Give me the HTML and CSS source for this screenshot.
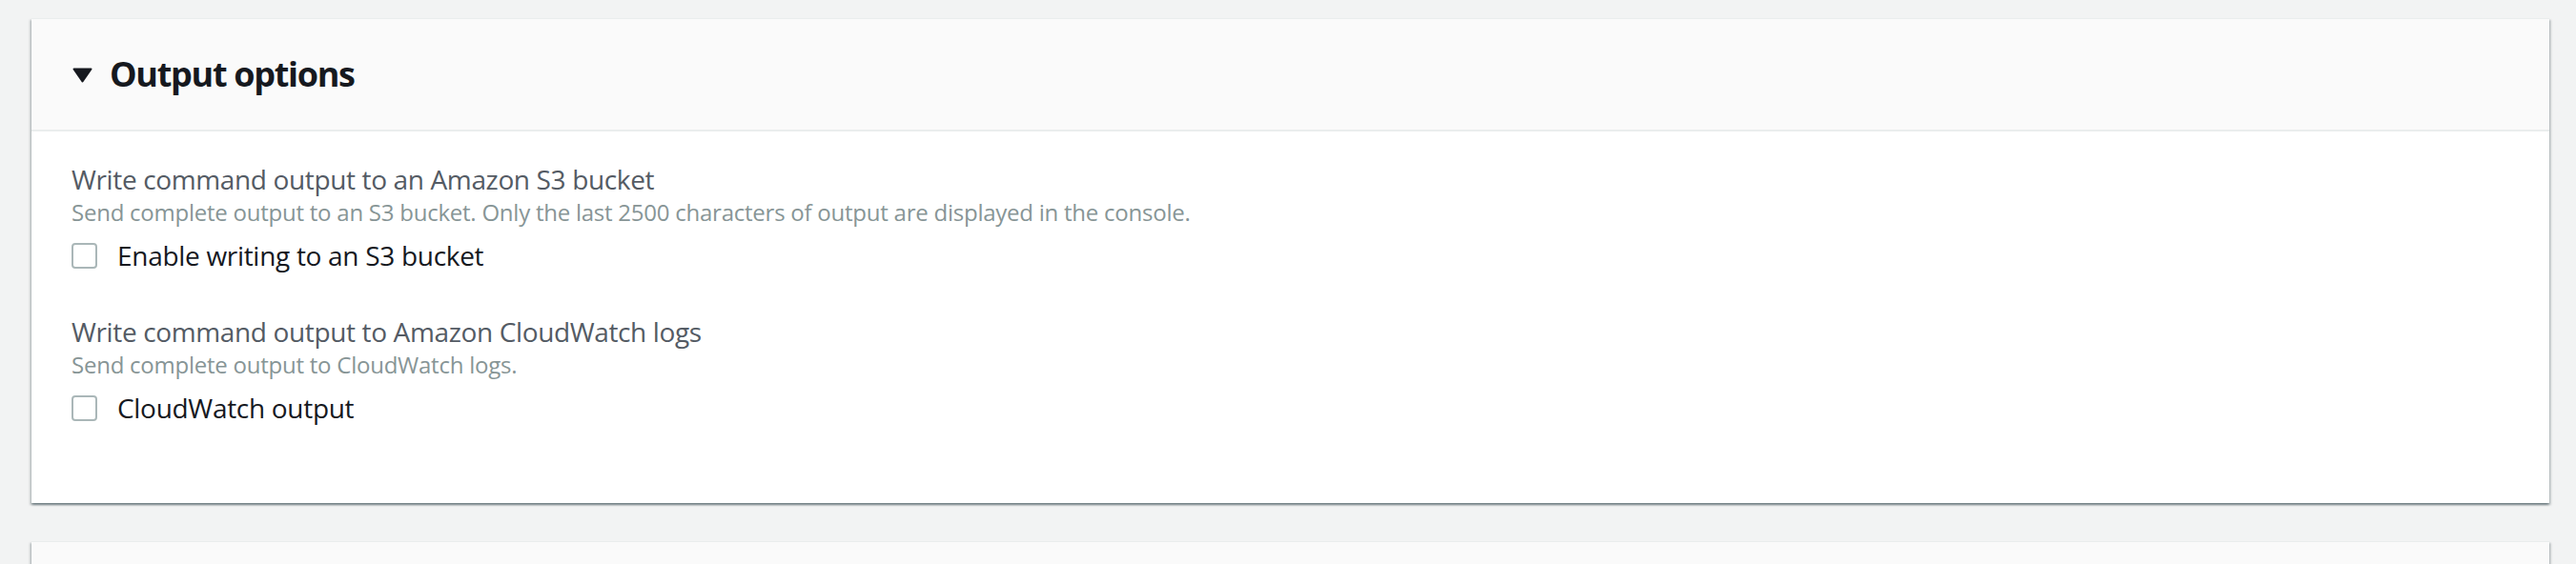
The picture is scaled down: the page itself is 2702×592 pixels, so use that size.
FILE: index.html
```html
<!DOCTYPE html>
<html lang="en">
<head>
<meta charset="utf-8">
<title>Output options</title>
<link rel="stylesheet" href="styles.css">
</head>
<body>
  <section class="card">
    <header class="card-header">
      <svg class="caret" width="21" height="16" viewBox="0 0 21 16" aria-hidden="true">
        <path d="M1.5 1.5 H19.5 L10.5 14.5 Z" fill="#16191f" stroke="#16191f" stroke-width="2" stroke-linejoin="round"/>
      </svg>
      <h2 class="card-title">Output options</h2>
    </header>
    <div class="card-body">
      <div class="field">
        <div class="field-label">Write command output to an Amazon S3 bucket</div>
        <div class="field-desc">Send complete output to an S3 bucket. Only the last 2500 characters of output are displayed in the console.</div>
        <label class="check-row"><span class="checkbox"></span><span class="check-label">Enable writing to an S3 bucket</span></label>
      </div>
      <div class="field">
        <div class="field-label">Write command output to Amazon CloudWatch logs</div>
        <div class="field-desc">Send complete output to CloudWatch logs.</div>
        <label class="check-row"><span class="checkbox"></span><span class="check-label">CloudWatch output</span></label>
      </div>
    </div>
  </section>
  <section class="card card-next">
    <div class="card-header-stub"></div>
  </section>
</body>
</html>
```

FILE: styles.css
```css
html, body {
  margin: 0;
  padding: 0;
}

body {
  background: #f2f3f3;
  padding: 19px 28px 0 33px;
  font-family: "Open Sans", "Noto Sans", sans-serif;
  color: #16191f;
  overflow: hidden;
}

.card {
  background: #ffffff;
  border-top: 1px solid #eaeded;
  box-shadow: 0 2px 2px 0 rgba(0, 28, 36, 0.35),
              2px 2px 2px 0 rgba(0, 28, 36, 0.15),
              -2px 2px 2px 0 rgba(0, 28, 36, 0.15);
}

.card-header {
  background: #fafafa;
  height: 118px;
  box-sizing: border-box;
  border-bottom: 2px solid #eaeded;
  display: flex;
  align-items: center;
  gap: 18px;
  padding-left: 43px;
}

.caret {
  display: block;
  margin-top: 2px;
}

.card-title {
  margin: 0;
  font-size: 36px;
  font-weight: 700;
  line-height: 44px;
  color: #16191f;
  letter-spacing: -1.3px;
}

.card-body {
  display: flex;
  flex-direction: column;
  gap: 41px;
  padding: 31px 42px 80px;
}

.field {
  display: flex;
  flex-direction: column;
}

.field-label {
  font-size: 28px;
  line-height: 38px;
  color: #545b64;
  letter-spacing: -0.36px;
}

.field-desc {
  font-size: 24px;
  line-height: 32px;
  color: #879596;
  letter-spacing: -0.24px;
}

.check-row {
  display: flex;
  align-items: center;
  gap: 21px;
  margin-top: 9px;
  height: 40px;
}

.checkbox {
  width: 27px;
  height: 27px;
  box-sizing: border-box;
  border: 2px solid #aab7b8;
  border-radius: 4px;
  background: #ffffff;
  flex: none;
}

.check-label {
  font-size: 28px;
  line-height: 40px;
  color: #16191f;
  letter-spacing: -0.3px;
}

.card-next {
  margin-top: 40px;
  background: #fafafa;
}

.card-header-stub {
  height: 116px;
}
```
